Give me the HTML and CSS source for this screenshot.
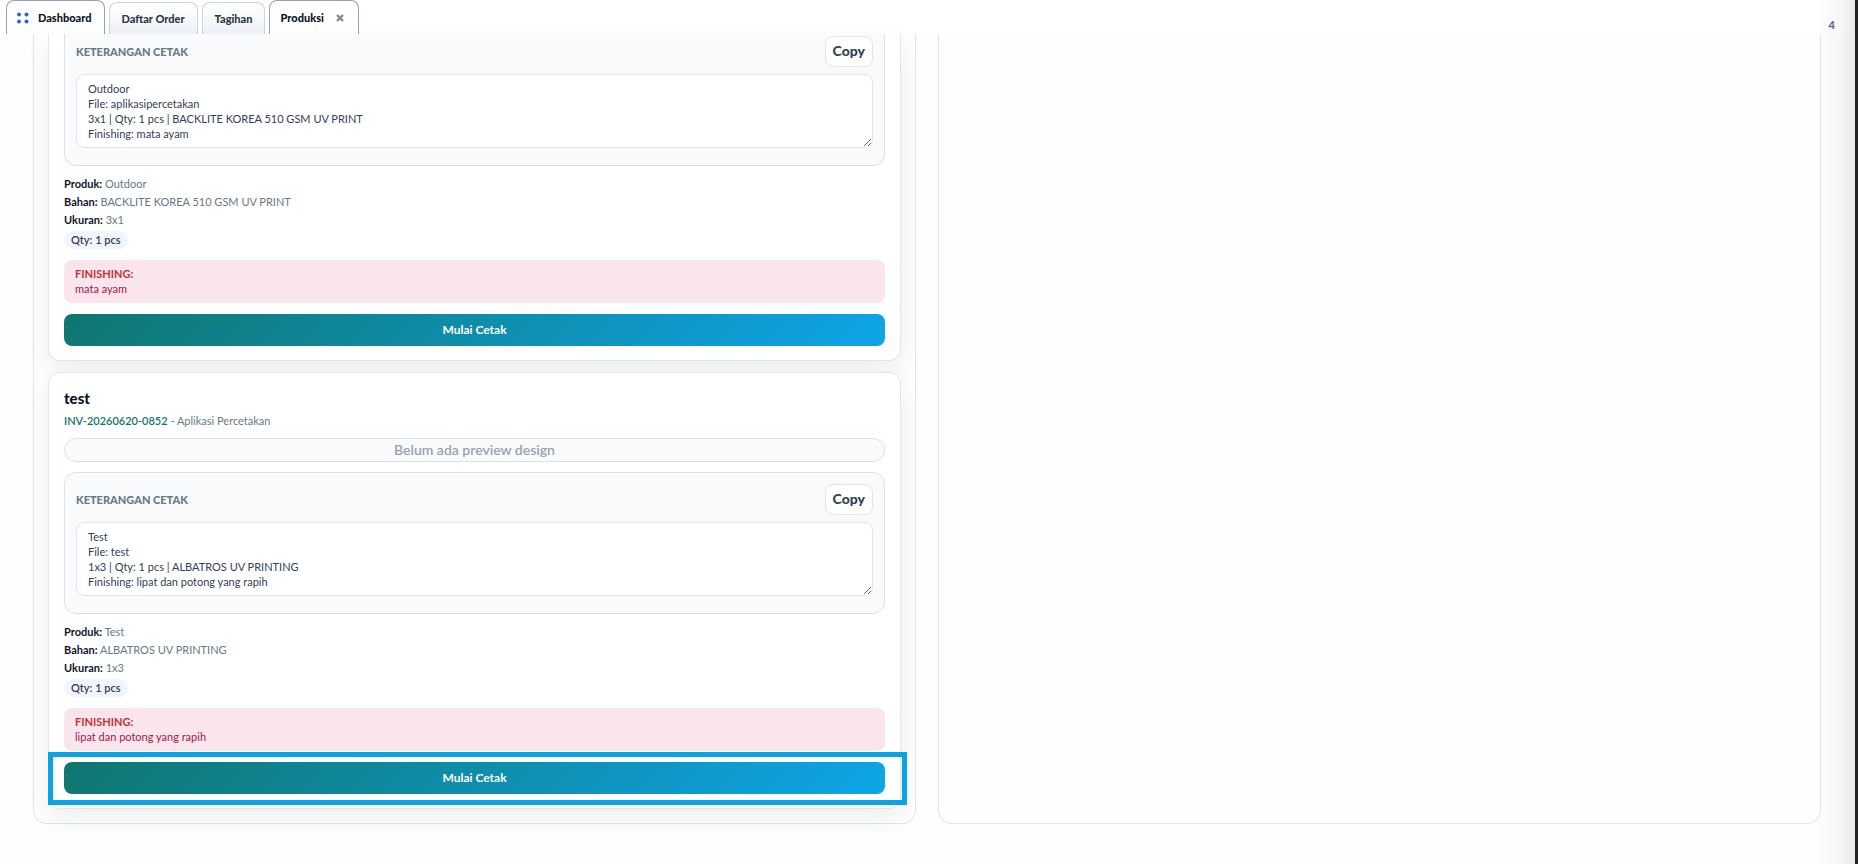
FILE: index.html
```html
<!DOCTYPE html>
<html lang="id">
<head>
  <meta charset="UTF-8">
  <meta name="viewport" content="width=device-width, initial-scale=1.0">
  <title>Produksi</title>
  <link rel="stylesheet" href="styles.css">
</head>
<body>
  <header class="topbar">
    <nav class="tabs">
      <a class="tab tab-home" href="#">
        <svg class="tab-icon" width="12" height="12" viewBox="0 0 12 12" fill="#2f62d9">
          <circle cx="2" cy="2.5" r="2"/>
          <circle cx="9.5" cy="2.5" r="2"/>
          <circle cx="2" cy="9.5" r="2"/>
          <circle cx="9.5" cy="9.5" r="2"/>
        </svg>
        Dashboard
      </a>
      <a class="tab" href="#">Daftar Order</a>
      <a class="tab" href="#">Tagihan</a>
      <div class="tab tab-active">
        <a href="#">Produksi</a>
        <button class="tab-close" type="button" aria-label="Tutup">
          <svg width="8" height="8" viewBox="0 0 8 8" fill="none" stroke="#7d8b9d" stroke-width="2.4">
            <path d="M1 1l6 6M7 1L1 7"/>
          </svg>
        </button>
      </div>
    </nav>
    <span class="counter">4</span>
  </header>

  <main class="board">
    <section class="column">
      <article class="card card-cut">
        <div class="note note-cut">
          <div class="note-head">
            <label for="note-1">KETERANGAN CETAK</label>
            <button class="btn-copy" type="button">Copy</button>
          </div>
          <textarea id="note-1" rows="4" readonly>Outdoor
File: aplikasipercetakan
3x1 | Qty: 1 pcs | BACKLITE KOREA 510 GSM UV PRINT
Finishing: mata ayam</textarea>
        </div>
        <div class="details">
          <p><strong>Produk:</strong> Outdoor</p>
          <p><strong>Bahan:</strong> BACKLITE KOREA 510 GSM UV PRINT</p>
          <p><strong>Ukuran:</strong> 3x1</p>
          <span class="qty">Qty: 1 pcs</span>
        </div>
        <div class="finishing">
          <strong>FINISHING:</strong>
          <p>mata ayam</p>
        </div>
        <button class="btn-start" type="button">Mulai Cetak</button>
      </article>

      <article class="card">
        <h2 class="card-title">test</h2>
        <p class="card-meta"><a href="#">INV-20260620-0852</a> - Aplikasi Percetakan</p>
        <div class="preview">Belum ada preview design</div>
        <div class="note">
          <div class="note-head">
            <label for="note-2">KETERANGAN CETAK</label>
            <button class="btn-copy" type="button">Copy</button>
          </div>
          <textarea id="note-2" rows="4" readonly>Test
File: test
1x3 | Qty: 1 pcs | ALBATROS UV PRINTING
Finishing: lipat dan potong yang rapih</textarea>
        </div>
        <div class="details">
          <p><strong>Produk:</strong> Test</p>
          <p><strong>Bahan:</strong> ALBATROS UV PRINTING</p>
          <p><strong>Ukuran:</strong> 1x3</p>
          <span class="qty">Qty: 1 pcs</span>
        </div>
        <div class="finishing">
          <strong>FINISHING:</strong>
          <p>lipat dan potong yang rapih</p>
        </div>
        <div class="action">
          <button class="btn-start" type="button">Mulai Cetak</button>
          <div class="marker"></div>
        </div>
      </article>
    </section>

    <section class="column"></section>
  </main>
</body>
</html>
```
FILE: styles.css
```css
* {
  box-sizing: border-box;
}

body {
  margin: 0;
  min-height: 100vh;
  font-family: Lato, "Liberation Sans", sans-serif;
  font-size: 11px;
  color: #2d3748;
  background: #fefefe;
  border-right: 3px solid #242424;
}

/* shade along the right edge of the window */
body::after {
  content: "";
  position: fixed;
  top: 0;
  right: 3px;
  bottom: 0;
  width: 40px;
  background: linear-gradient(to right, rgba(15, 23, 42, 0), rgba(15, 23, 42, 0.03) 60%, rgba(15, 23, 42, 0.09));
  pointer-events: none;
}

p,
h2 {
  margin: 0;
}

a {
  color: inherit;
  text-decoration: none;
}

button,
textarea {
  font-family: inherit;
}

/* Tabs */
.topbar {
  display: flex;
  justify-content: space-between;
  height: 34px;
  padding: 0 20px 0 6px;
  background: #fff;
}

.tabs {
  display: flex;
  align-items: flex-end;
  gap: 4px;
}

.tab {
  display: flex;
  align-items: center;
  height: 32px;
  padding: 0 12px;
  font-size: 11px;
  font-weight: 900;
  color: #2d3748;
  background: linear-gradient(#fff, #eef2f8);
  border: 1px solid #ccd4dd;
  border-bottom: 0;
  border-radius: 8px 8px 0 0;
}

.tab-home,
.tab-active {
  height: 34px;
  padding-left: 10px;
  color: #0b1326;
  background: #fff;
  border-color: #98a2b0;
}

.tab-active {
  padding-right: 10px;
}

.tab-icon {
  margin-right: 9px;
}

.tab-close {
  display: flex;
  margin-left: 8px;
  padding: 0 4px;
  background: none;
  border: 0;
}

.counter {
  padding-top: 17px;
  font-weight: 900;
  line-height: 15px;
  color: #5c6f96;
}

/* Board */
.board {
  display: grid;
  grid-template-columns: 1fr 1fr;
  gap: 22px;
  padding: 0 34px 39px 33px;
}

.column {
  display: flex;
  flex-direction: column;
  gap: 11px;
  padding: 0 14px 14px;
  border: 1px solid #dfe7ea;
  border-top: 0;
  border-radius: 0 0 14px 14px;
}

.card {
  display: flex;
  flex-direction: column;
  padding: 15px 15px 14px;
  background: #fff;
  border: 1px solid #dfe7ea;
  border-radius: 12px;
  box-shadow: 0 10px 26px rgba(15, 23, 42, 0.07);
}

.card-cut {
  padding-top: 0;
  border-top: 0;
  border-radius: 0 0 12px 12px;
}

.card-title {
  font-size: 15px;
  font-weight: 900;
  line-height: 20px;
  color: #06142b;
}

.card-meta {
  margin-top: 5px;
  line-height: 15px;
  color: #667985;
}

.card-meta a {
  font-weight: 600;
  color: #0f766e;
}

.preview {
  margin: 10px 0;
  font-size: 14px;
  font-weight: 600;
  line-height: 22px;
  text-align: center;
  color: #9aa1b1;
  background: #f8fafc;
  border: 1px solid #d9e3e7;
  border-radius: 12px;
}

.note {
  padding: 11px 11px 17px;
  background: #f8fafc;
  border: 1px solid #d9e3e7;
  border-radius: 12px;
}

.note-cut {
  padding-top: 2px;
  border-top: 0;
  border-radius: 0 0 12px 12px;
}

.note-head {
  display: flex;
  align-items: center;
  justify-content: space-between;
  margin-bottom: 7px;
  font-weight: 900;
  color: #667985;
}

.btn-copy {
  height: 31px;
  padding: 0 7px 2px;
  font-size: 14px;
  font-weight: 900;
  color: #334155;
  background: #fff;
  border: 1px solid #dfe7ea;
  border-radius: 8px;
}

.note textarea {
  display: block;
  width: 100%;
  padding: 6px 11px;
  font-size: 11px;
  line-height: 15px;
  color: #334155;
  background: #fff;
  border: 1px solid #dfe7ea;
  border-radius: 8px;
  outline: 0;
  resize: vertical;
}

.details {
  margin: 9px 0 11px;
  line-height: 18px;
  color: #667985;
}

.details strong {
  color: #0f172a;
}

.qty {
  display: block;
  width: fit-content;
  margin-top: 2px;
  padding: 0 7px;
  font-weight: 600;
  color: #334155;
  background: #f1f4f9;
  border-radius: 10px;
}

.finishing {
  margin-bottom: 11px;
  padding: 6px 11px 7px;
  line-height: 15px;
  color: #a3174b;
  background: #fbe5ec;
  border-radius: 8px;
}

.finishing strong {
  color: #c53030;
}

.btn-start {
  width: 100%;
  height: 32px;
  padding: 0 0 2px;
  font-size: 12px;
  font-weight: 700;
  color: #fff;
  background: linear-gradient(135deg, #0f766e, #0ea5e9);
  border: 0;
  border-radius: 8px;
}

/* Frame around the start button */
.action {
  position: relative;
}

.marker {
  position: absolute;
  top: -10px;
  right: -22px;
  bottom: -11px;
  left: -16px;
  border: 5px solid #0aa3e3;
  pointer-events: none;
}
```
